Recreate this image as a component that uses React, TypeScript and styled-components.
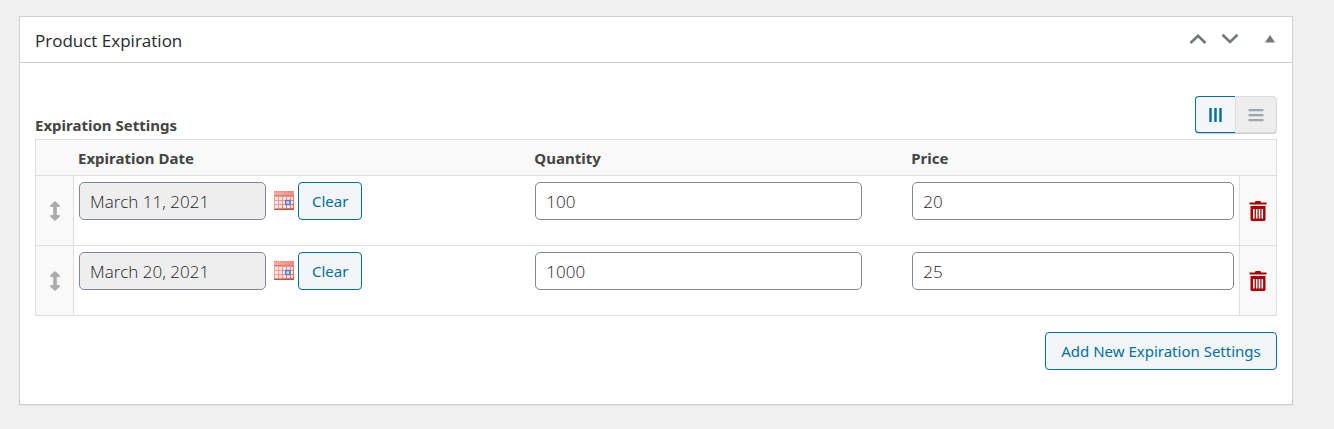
import React, { useState } from "react";
import styled, { createGlobalStyle } from "styled-components";

const GlobalStyle = createGlobalStyle`
  *, *::before, *::after { box-sizing: border-box; }
  body {
    margin: 0;
    background: #f0f0f0;
    color: #444;
    font-family: "Segoe UI", "Noto Sans", sans-serif;
    font-size: 15px;
    line-height: 20px;
  }
  button, input { font-family: inherit; }
`;

const Page = styled.main`
  padding: 16px 41px 24px 19px;
`;

const Panel = styled.section`
  background: #fff;
  border: 1px solid #ccd0d4;
  box-shadow: 0 1px 1px rgba(0, 0, 0, 0.04);
`;

const PanelHeader = styled.header`
  display: flex;
  align-items: center;
  justify-content: space-between;
  height: 46px;
  padding: 0 15px;
  border-bottom: 1px solid #ccd0d4;
`;

const PanelTitle = styled.h2`
  margin: 2px 0 0;
  color: #23282d;
  font-family: "Segoe UI", "Open Sans", sans-serif;
  font-size: 17px;
  font-weight: 500;
  line-height: 22px;
`;

const PanelActions = styled.div`
  display: flex;
  align-items: center;
  margin-bottom: 2px;
`;

const IconButton = styled.button<{ $width: number }>`
  display: flex;
  align-items: center;
  justify-content: center;
  width: ${(p) => p.$width}px;
  height: 32px;
  padding: 0;
  border: 0;
  background: none;
  color: #72777c;
  cursor: pointer;

  &:last-child { margin-left: 17px; }
`;

const PanelBody = styled.div`
  padding: 33px 15px 34px;
`;

const SettingsBar = styled.div`
  display: flex;
  align-items: flex-end;
  justify-content: space-between;
  margin-bottom: 6px;
`;

const SettingsTitle = styled.h3`
  margin: 0;
  font-size: 15px;
  font-weight: 700;
  line-height: 16px;
`;

const Toggle = styled.div`
  display: flex;
`;

const ToggleButton = styled.button<{ $active: boolean }>`
  display: flex;
  align-items: center;
  justify-content: center;
  width: 42px;
  height: 37px;
  padding: 0;
  border: 1px solid ${(p) => (p.$active ? "#0071a1" : "#dcdcde")};
  background: ${(p) => (p.$active ? "#f3f5f6" : "#ededed")};
  color: ${(p) => (p.$active ? "#0071a1" : "#a0a5aa")};
  box-shadow: 0 1px 0 #ccc;
  cursor: pointer;

  &:first-child { width: 40px; border-right-width: 0; border-radius: 4px 0 0 4px; }
  &:last-child { border-radius: 0 4px 4px 0; }
`;

const Table = styled.table`
  width: 100%;
  table-layout: fixed;
  border: 1px solid #dfdfdf;
  border-spacing: 0;
`;

const Col = styled.col<{ $width?: string }>`
  width: ${(p) => p.$width ?? "auto"};
`;

const HeadCell = styled.th`
  height: 36px;
  padding: 0 4px;
  border-bottom: 1px solid #dfdfdf;
  background: #f9f9f9;
  font-size: 15px;
  font-weight: 700;
  text-align: left;
`;

const Row = styled.tr`
  height: 70px;

  &:not(:last-child) > td { border-bottom: 1px solid #dfdfdf; }
  &:last-child { height: 69px; }
`;

const Cell = styled.td`
  padding: 6px 5px;
  vertical-align: top;
`;

const SideCell = styled.td<{ $side: "left" | "right" }>`
  padding: 0;
  background: #f9f9f9;
  border-${(p) => (p.$side === "left" ? "right" : "left")}: 1px solid #dfdfdf;
`;

const SideButton = styled.button<{ $color: string }>`
  display: flex;
  align-items: center;
  justify-content: center;
  width: 100%;
  padding: 0;
  border: 0;
  background: none;
  color: ${(p) => p.$color};
  cursor: pointer;
`;

const DateField = styled.div`
  display: flex;
  align-items: center;
`;

const TextInput = styled.input<{ $width: string }>`
  display: block;
  width: ${(p) => p.$width};
  height: 38px;
  padding: 0 10px;
  border: 1px solid #7e8993;
  border-radius: 5px;
  background: #fff;
  color: #1d2327;
  font-family: "Segoe UI", "Open Sans", sans-serif;
  font-size: 17px;
  font-weight: 300;

  &:read-only { background: #eee; }
`;

const CalendarButton = styled.button`
  display: flex;
  margin: 0 4px 0 8px;
  padding: 0;
  border: 0;
  background: none;
  cursor: pointer;
`;

const Button = styled.button`
  height: 38px;
  padding: 0 13px;
  border: 1px solid #0071a1;
  border-radius: 4px;
  background: #f3f5f6;
  color: #0071a1;
  font-size: 15px;
  white-space: nowrap;
  cursor: pointer;
`;

const AddButton = styled(Button)`
  min-width: 232px;
`;

const Footer = styled.footer`
  display: flex;
  justify-content: flex-end;
  margin-top: 16px;
`;

const Chevron = ({ down = false }: { down?: boolean }) => (
  <svg width="18" height="12" viewBox="0 0 18 12" fill="none" stroke="currentColor" strokeWidth="2.6" aria-hidden="true">
    <path d={down ? "M1.5 1.8 9 9 16.5 1.8" : "M1.5 10 9 2.8 16.5 10"} />
  </svg>
);

const Triangle = () => (
  <svg width="10" height="8" viewBox="0 0 10 8" fill="currentColor" aria-hidden="true">
    <path d="M5 0 10 7.5H0Z" />
  </svg>
);

const ColumnsIcon = () => (
  <svg width="14" height="14" viewBox="0 0 14 14" fill="currentColor" aria-hidden="true">
    <path d="M.3 0h2.4v14H.3zM5.3 0h2.4v14H5.3zM10.3 0h2.4v14h-2.4z" />
  </svg>
);

const RowsIcon = () => (
  <svg width="16" height="14" viewBox="0 0 16 14" fill="currentColor" aria-hidden="true">
    <rect x="0.5" y="1" width="15" height="2.2" rx="0.6" />
    <rect x="0.5" y="6" width="15" height="2.2" rx="0.6" />
    <rect x="0.5" y="11" width="15" height="2.2" rx="0.6" />
  </svg>
);

const MoveIcon = () => (
  <svg width="10" height="20" viewBox="0 0 10 20" fill="currentColor" aria-hidden="true">
    <path d="M5 0 9.7 4.3V6H6.8v8h2.9v1.7L5 20 .3 15.7V14h2.9V6H.3V4.3Z" />
  </svg>
);

const TrashIcon = () => (
  <svg width="18" height="22" viewBox="0 0 18 22" fill="currentColor" aria-hidden="true">
    <path d="M6 2.5V2Q6.3 1 7 1h4q.7 0 1 1v.5h5.500v2H.5v-2Z" />
    <path fillRule="evenodd" d="M1.500 6h15v13.500q0 1.500-1.500 1.500H3q-1.500 0-1.500-1.500ZM4 9v9.600h1.600V9ZM6.900 9v9.600h1.600V9ZM9.700 9v9.600h1.600V9ZM12.500 9v9.600h1.600V9Z" />
  </svg>
);

const CalendarIcon = () => (
  <svg width="20" height="20" viewBox="0 0 20 20" aria-hidden="true">
    <defs>
      <linearGradient id="calendarRed" x1="0" y1="0" x2="1" y2="1">
        <stop offset="0" stopColor="#f9b5ab" />
        <stop offset="0.55" stopColor="#f78d84" />
        <stop offset="1" stopColor="#e0574a" />
      </linearGradient>
    </defs>
    <rect y="0" width="20" height="19" fill="url(#calendarRed)" />
    <path d="M0 .8h20" stroke="#d0786c" strokeDasharray="1 1" />
    <path d="M0 4.5h20" stroke="#e0766c" />
    <path d="M0 18.5h20" stroke="#b8574b" />
    <g fill="#ffe9e5">
      {[6, 10, 14].map((y) =>
        [1, 5, 9, 13, 17].map((x) => <rect key={`${x}-${y}`} x={x} y={y} width={x === 17 ? 2 : 3} height="3" />)
      )}
    </g>
    <rect x="11.8" y="9.5" width="4" height="4" fill="#d9e6ff" stroke="#4a7de8" strokeWidth="1.5" />
  </svg>
);

const settings = [
  { date: "March 11, 2021", quantity: "100", price: "20" },
  { date: "March 20, 2021", quantity: "1000", price: "25" },
];

export default function App() {
  const [layout, setLayout] = useState<"columns" | "rows">("columns");

  return (
    <>
      <GlobalStyle />
      <Page>
        <Panel>
          <PanelHeader>
            <PanelTitle>Product Expiration</PanelTitle>
            <PanelActions>
              <IconButton $width={32} type="button" aria-label="Move up"><Chevron /></IconButton>
              <IconButton $width={32} type="button" aria-label="Move down"><Chevron down /></IconButton>
              <IconButton $width={14} type="button" aria-label="Toggle panel"><Triangle /></IconButton>
            </PanelActions>
          </PanelHeader>
          <PanelBody>
            <SettingsBar>
              <SettingsTitle>Expiration Settings</SettingsTitle>
              <Toggle>
                <ToggleButton type="button" aria-label="Column layout" aria-pressed={layout === "columns"} $active={layout === "columns"} onClick={() => setLayout("columns")}>
                  <ColumnsIcon />
                </ToggleButton>
                <ToggleButton type="button" aria-label="Row layout" aria-pressed={layout === "rows"} $active={layout === "rows"} onClick={() => setLayout("rows")}>
                  <RowsIcon />
                </ToggleButton>
              </Toggle>
            </SettingsBar>
            <Table>
              <colgroup>
                <Col $width="38px" />
                <Col $width="36.8%" />
                <Col $width="30.4%" />
                <Col />
                <Col $width="37px" />
              </colgroup>
              <thead>
                <tr>
                  <HeadCell aria-label="Order" />
                  <HeadCell scope="col">Expiration Date</HeadCell>
                  <HeadCell scope="col">Quantity</HeadCell>
                  <HeadCell scope="col">Price</HeadCell>
                  <HeadCell aria-label="Remove" />
                </tr>
              </thead>
              <tbody>
                {settings.map((s) => (
                  <Row key={s.date}>
                    <SideCell $side="left">
                      <SideButton type="button" $color="#aaa" aria-label="Reorder"><MoveIcon /></SideButton>
                    </SideCell>
                    <Cell>
                      <DateField>
                        <TextInput $width="187px" readOnly defaultValue={s.date} aria-label="Expiration Date" />
                        <CalendarButton type="button" aria-label="Pick a date"><CalendarIcon /></CalendarButton>
                        <Button type="button">Clear</Button>
                      </DateField>
                    </Cell>
                    <Cell><TextInput $width="89%" defaultValue={s.quantity} aria-label="Quantity" /></Cell>
                    <Cell><TextInput $width="100%" defaultValue={s.price} aria-label="Price" /></Cell>
                    <SideCell $side="right">
                      <SideButton type="button" $color="#a00" aria-label="Delete"><TrashIcon /></SideButton>
                    </SideCell>
                  </Row>
                ))}
              </tbody>
            </Table>
            <Footer>
              <AddButton type="button">Add New Expiration Settings</AddButton>
            </Footer>
          </PanelBody>
        </Panel>
      </Page>
    </>
  );
}
